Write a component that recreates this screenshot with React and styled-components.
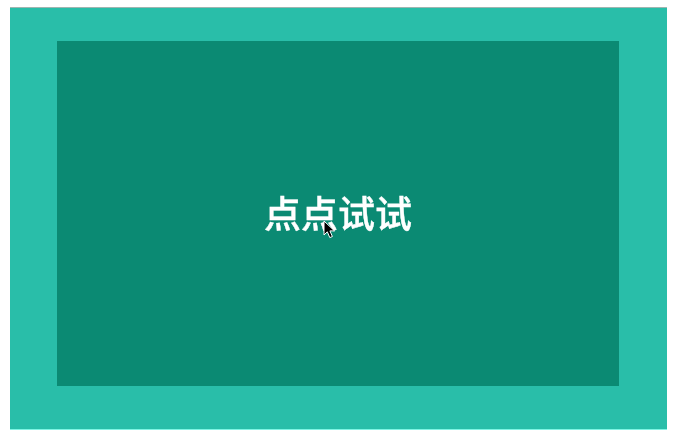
import styled, { createGlobalStyle } from "styled-components";

const GlobalStyle = createGlobalStyle`
  html, body {
    margin: 0;
    padding: 0;
    background: #fff;
  }
`;

const Page = styled.div`
  width: 676px;
  height: 438px;
  box-sizing: border-box;
  padding: 7px 9px 8px 10px;
`;

const Outer = styled.div`
  height: 100%;
  box-sizing: border-box;
  padding: 33px 48px 43px 47px;
  background: #29bea9;
  border-top: 1px solid #9fb5b0;
  border-bottom: 1px solid #7ff5e4;
`;

const Inner = styled.div`
  position: relative;
  height: 100%;
  display: flex;
  align-items: center;
  justify-content: center;
  background: #0b8a73;
`;

const Label = styled.span`
  margin-bottom: 3px;
  color: #fff;
  font-family: "Noto Sans CJK SC", "Liberation Sans", sans-serif;
  font-size: 37px;
  line-height: 1;
  font-weight: 500;
  -webkit-text-stroke: 0.4px #fff;
  filter: blur(0.35px);
`;

const Cursor = styled.svg`
  position: absolute;
  left: 266px;
  top: 179px;
  width: 13px;
  height: 19px;
`;

export default function App() {
  return (
    <>
      <GlobalStyle />
      <Page>
        <Outer>
          <Inner>
            <Label>点点试试</Label>
            <Cursor viewBox="0 0 13 19">
              <path
                d="M1 1v14l3.300-3.200 2.500 5.800 2.600-1.100-2.500-5.600H11.500z"
                fill="#000"
                stroke="#fff"
                strokeWidth="1"
              />
            </Cursor>
          </Inner>
        </Outer>
      </Page>
    </>
  );
}
